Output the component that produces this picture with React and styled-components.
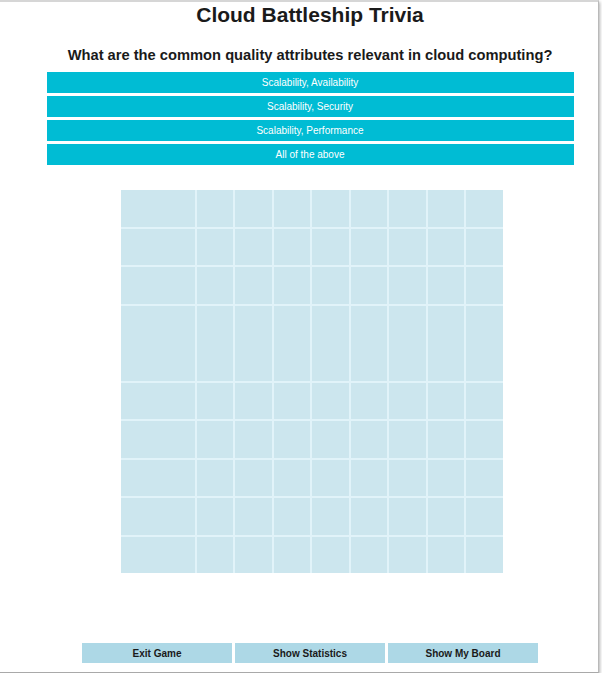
import React from "react";
import styled, { createGlobalStyle } from "styled-components";

const GlobalStyle = createGlobalStyle`
  html, body {
    margin: 0;
    padding: 0;
    background: #fff;
    overflow: hidden;
  }
  body {
    font-family: "Liberation Sans", Arial, sans-serif;
  }
`;

const Frame = styled.div`
  width: 598px;
  height: 670px;
  border-top: 2px solid #d6d6d6;
  border-right: 1px solid #b9b9b9;
  border-bottom: 1px solid #a9a9a9;
  box-shadow: 1px 2px 3px rgba(0, 0, 0, 0.3);
  overflow: hidden;
  background: #fff;
`;

const Page = styled.div`
  width: 620px;
  display: flex;
  flex-direction: column;
  align-items: center;
`;

const Title = styled.h1`
  margin: 0;
  font-size: 21px;
  line-height: 26px;
  font-weight: bold;
  color: #1a1a1a;
`;

const Question = styled.h2`
  margin: 14px 0 0;
  font-size: 14.7px;
  line-height: 26px;
  font-weight: bold;
  color: #1a1a1a;
`;

const Options = styled.div`
  width: 527px;
  margin-top: 4px;
  display: flex;
  flex-direction: column;
  gap: 3px;
`;

const Option = styled.button`
  height: 21px;
  border: none;
  padding: 0;
  background: #00bcd4;
  color: #fff;
  font-family: "Liberation Sans", Arial, sans-serif;
  font-size: 10px;
  cursor: pointer;
`;

const BoardWrap = styled.div`
  margin-top: 25px;
  padding-left: 3px;
`;

const Board = styled.div`
  display: grid;
  grid-template-columns: 74px repeat(8, 36.5px);
  grid-template-rows: repeat(3, 36.5px) 75px repeat(5, 36.5px);
  gap: 2px;
  background: #e1f3f9;
`;

const Cell = styled.div`
  background: #cce6ee;
`;

const Footer = styled.div`
  margin-top: 70px;
  display: flex;
  gap: 3px;
`;

const FooterButton = styled.button`
  width: 150px;
  height: 20px;
  border: none;
  padding: 0;
  background: #add8e6;
  color: #1a1a1a;
  font-family: "Liberation Sans", Arial, sans-serif;
  font-size: 10px;
  font-weight: bold;
  cursor: pointer;
`;

const answers = [
  "Scalability, Availability",
  "Scalability, Security",
  "Scalability, Performance",
  "All of the above",
];

export default function App() {
  const cells = Array.from({ length: 81 }, (_, i) => i);

  return (
    <Frame>
      <GlobalStyle />
      <Page>
        <Title>Cloud Battleship Trivia</Title>
        <Question>
          What are the common quality attributes relevant in cloud computing?
        </Question>
        <Options>
          {answers.map((a) => (
            <Option key={a}>{a}</Option>
          ))}
        </Options>
        <BoardWrap>
          <Board>
            {cells.map((i) => (
              <Cell key={i} />
            ))}
          </Board>
        </BoardWrap>
        <Footer>
          <FooterButton>Exit Game</FooterButton>
          <FooterButton>Show Statistics</FooterButton>
          <FooterButton>Show My Board</FooterButton>
        </Footer>
      </Page>
    </Frame>
  );
}
